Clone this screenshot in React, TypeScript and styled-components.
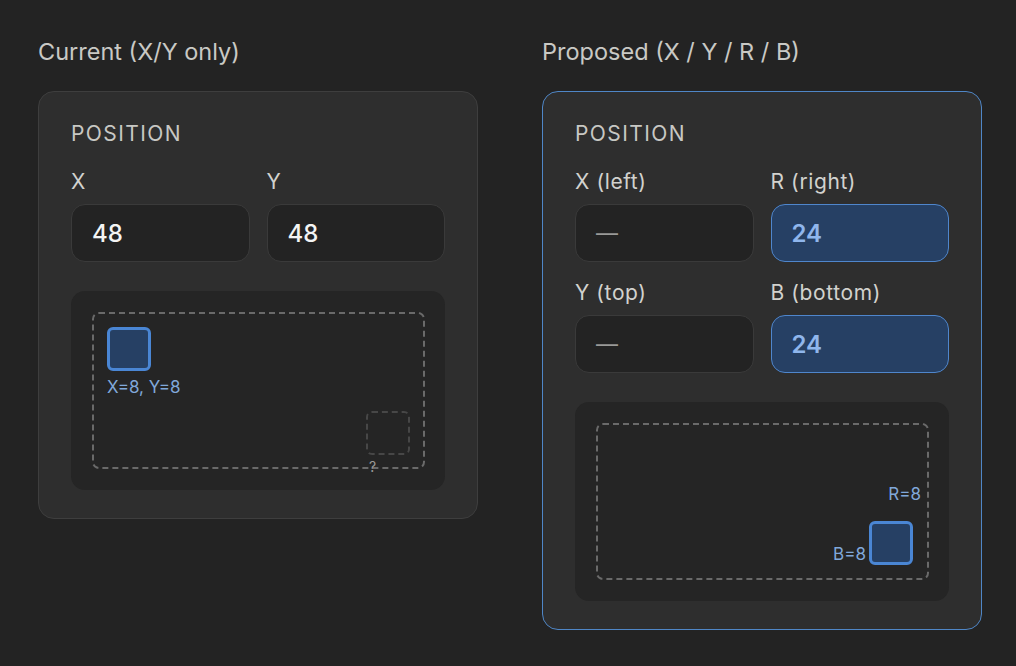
import React from "react";
import styled, { createGlobalStyle, css } from "styled-components";

const GlobalStyle = createGlobalStyle`
    html, body {
        margin: 0;
        padding: 0;
        background: #232323;
    }
    body {
        font-family: Inter, "Noto Sans", sans-serif;
        color: #cfcfcb;
    }
`;

const Page = styled.div`
    display: flex;
    gap: 64px;
    padding: 38px 0 0 38px;
    min-height: 666px;
    box-sizing: border-box;
    align-items: flex-start;
`;

const Column = styled.section`
    flex: none;
    width: 440px;
    display: flex;
    flex-direction: column;
    gap: 25px;
`;

const Title = styled.h2`
    margin: 0;
    font-size: 23.5px;
    line-height: 28px;
    font-weight: 400;
    color: #c9c9c5;
`;

const Card = styled.div<{ $active?: boolean }>`
    background: #2e2e2e;
    border: 1px solid ${(p) => (p.$active ? "#4f86c6" : "#3e3e3e")};
    border-radius: 16px;
    padding: 30px 32px 28px 32px;
    display: flex;
    flex-direction: column;
`;

const SectionLabel = styled.div`
    font-size: 21px;
    line-height: 24px;
    letter-spacing: 1.4px;
    color: #c8c8c4;
    margin-bottom: 24px;
`;

const FieldGrid = styled.div`
    display: grid;
    grid-template-columns: 1fr 1fr;
    column-gap: 17px;
    row-gap: 19px;
`;

const Field = styled.div`
    display: flex;
    flex-direction: column;
    gap: 10px;
`;

const FieldLabel = styled.label`
    font-size: 21px;
    line-height: 24px;
    letter-spacing: 0.6px;
    color: #d2d2ce;
`;

const ValueBox = styled.div<{ $active?: boolean; $empty?: boolean }>`
    height: 58px;
    box-sizing: border-box;
    border-radius: 14px;
    padding: 0 20px;
    display: flex;
    align-items: center;
    font-size: 24px;
    font-weight: 500;
    background: #232323;
    border: 1px solid #3a3a3a;
    color: #f4f4f4;
    ${(p) =>
        p.$empty &&
        css`
            color: #9a9a98;
            font-size: 22px;
            font-weight: 400;
        `}
    ${(p) =>
        p.$active &&
        css`
            background: #264064;
            border-color: #4f86cc;
            color: #8fb6ec;
            font-weight: 600;
        `}
`;

const Preview = styled.div`
    margin-top: 29px;
    height: 199px;
    box-sizing: border-box;
    background: #252525;
    border-radius: 14px;
    padding: 21px 20px 21px 21px;
`;

const Frame = styled.div`
    position: relative;
    height: 100%;
    box-sizing: border-box;
    border: 2px dashed #6a6a6a;
    border-radius: 7px;
`;

const Node = styled.div<{ $ghost?: boolean }>`
    position: absolute;
    width: 44px;
    height: 44px;
    box-sizing: border-box;
    border-radius: 6px;
    ${(p) =>
        p.$ghost
            ? css`
                  border: 2px dashed #474747;
              `
            : css`
                  border: 3px solid #4a86d4;
                  background: #264064;
              `}
`;

const Tag = styled.span<{ $muted?: boolean }>`
    position: absolute;
    font-size: 17px;
    line-height: 20px;
    white-space: nowrap;
    color: ${(p) => (p.$muted ? "#9a9a98" : "#80a8da")};
    ${(p) =>
        p.$muted &&
        css`
            font-size: 14px;
        `}
`;

type FieldDef = { label: string; value: string; active?: boolean; empty?: boolean };

const currentFields: FieldDef[] = [
    { label: "X", value: "48" },
    { label: "Y", value: "48" },
];

const proposedFields: FieldDef[] = [
    { label: "X (left)", value: "—", empty: true },
    { label: "R (right)", value: "24", active: true },
    { label: "Y (top)", value: "—", empty: true },
    { label: "B (bottom)", value: "24", active: true },
];

const Fields = ({ fields }: { fields: FieldDef[] }) => (
    <FieldGrid>
        {fields.map((f) => (
            <Field key={f.label}>
                <FieldLabel>{f.label}</FieldLabel>
                <ValueBox $active={f.active} $empty={f.empty}>
                    {f.value}
                </ValueBox>
            </Field>
        ))}
    </FieldGrid>
);

const App = () => {
    return (
        <>
            <GlobalStyle />
            <Page>
                <Column>
                    <Title>Current (X/Y only)</Title>
                    <Card>
                        <SectionLabel>POSITION</SectionLabel>
                        <Fields fields={currentFields} />
                        <Preview>
                            <Frame>
                                <Node style={{ left: 13, top: 13 }} />
                                <Tag style={{ left: 13, top: 63 }}>X=8, Y=8</Tag>
                                <Node $ghost style={{ right: 13, bottom: 12 }} />
                                <Tag $muted style={{ left: 275, bottom: -10 }}>?</Tag>
                            </Frame>
                        </Preview>
                    </Card>
                </Column>
                <Column>
                    <Title>Proposed (X / Y / R / B)</Title>
                    <Card $active>
                        <SectionLabel>POSITION</SectionLabel>
                        <Fields fields={proposedFields} />
                        <Preview>
                            <Frame>
                                <Tag style={{ right: 6, top: 59 }}>R=8</Tag>
                                <Tag style={{ right: 61, bottom: 14 }}>B=8</Tag>
                                <Node style={{ right: 14, bottom: 13 }} />
                            </Frame>
                        </Preview>
                    </Card>
                </Column>
            </Page>
        </>
    );
};

export default App;
